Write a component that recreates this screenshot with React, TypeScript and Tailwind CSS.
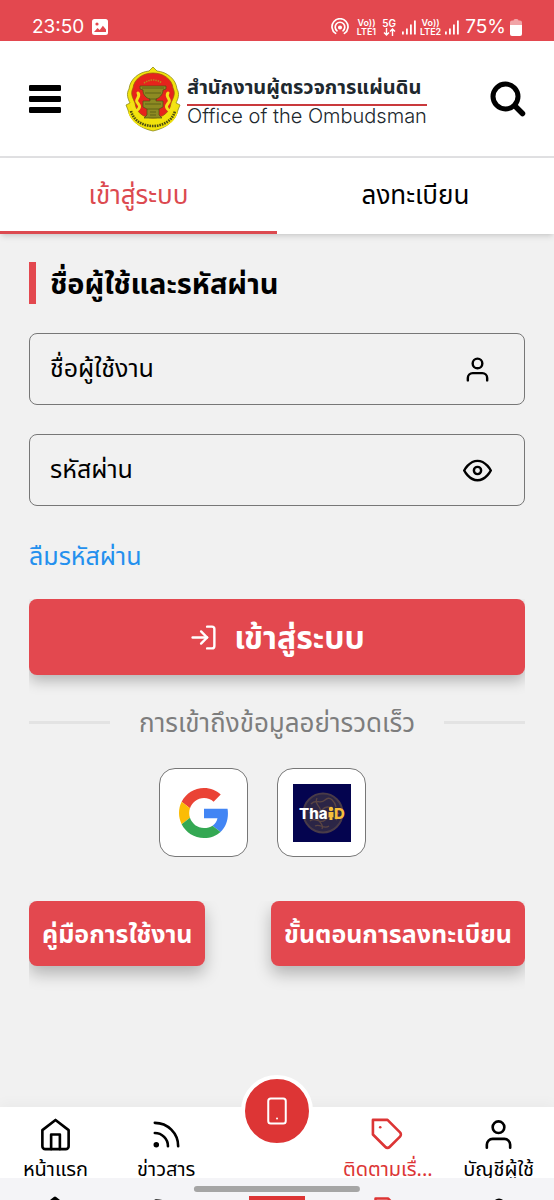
import { useState } from 'react'
import { FiEye, FiHome, FiLogIn, FiRss, FiSmartphone, FiTag, FiUser } from 'react-icons/fi'

const NAV_ITEMS = [
  { label: 'หน้าแรก', icon: FiHome, active: false },
  { label: 'ข่าวสาร', icon: FiRss, active: false },
  { label: '', icon: FiSmartphone, active: false },
  { label: 'ติดตามเรื่...', icon: FiTag, active: true },
  { label: 'บัญชีผู้ใช้', icon: FiUser, active: false },
]

const TABS = [
  { key: 'login', label: 'เข้าสู่ระบบ' },
  { key: 'register', label: 'ลงทะเบียน' },
] as const

function Signal() {
  return (
    <svg viewBox="0 0 14 15" className="h-[15px] w-3.5" fill="currentColor">
      <rect x="0" y="11.5" width="1.8" height="3" />
      <rect x="4" y="8.5" width="1.8" height="6" />
      <rect x="8" y="4.5" width="1.8" height="10" />
      <rect x="12" y="0.5" width="1.8" height="14" />
    </svg>
  )
}

function Volte({ sim }: { sim: number }) {
  return (
    <div className="flex flex-col items-center text-[9px] leading-[9px] font-semibold">
      <span>Vo))</span>
      <span>LTE{sim}</span>
    </div>
  )
}

function StatusBar() {
  return (
    <div className="flex h-[41px] items-end justify-between bg-[#e3484f] px-8 pb-1 font-['Inter',sans-serif] text-white">
      <div className="flex items-center gap-2">
        <span className="text-[19px] leading-5">23:50</span>
        <svg viewBox="0 0 16 16" className="h-4 w-4">
          <rect width="16" height="16" rx="2.5" fill="currentColor" />
          <circle cx="5" cy="5" r="1.6" fill="#e3484f" />
          <path d="M2 13l3.5-4 2.2 2 3.2-4.2L14 10.5V13z" fill="#e3484f" />
        </svg>
      </div>
      <div className="flex items-center gap-1">
        <svg viewBox="0 0 18 18" className="mr-1 h-[18px] w-[18px]" fill="none" stroke="currentColor" strokeWidth="1.7" strokeLinecap="round">
          <path d="M4.6 15.4a8 8 0 1 1 8.8 0" />
          <path d="M6 12.8a4.8 4.8 0 1 1 6 0" />
          <circle cx="9" cy="9.5" r="1.2" fill="currentColor" />
        </svg>
        <Volte sim={1} />
        <div className="mx-0.5 flex flex-col items-center">
          <span className="text-[10px] leading-[9px] font-semibold">5G</span>
          <svg viewBox="0 0 13 8" className="h-2 w-[13px]" fill="none" stroke="currentColor" strokeWidth="1.4">
            <path d="M3.5 0v7M1 4.5l2.5 2.5L6 4.5M9.5 8V1M7 3.5L9.5 1 12 3.5" />
          </svg>
        </div>
        <Signal />
        <Volte sim={2} />
        <Signal />
        <span className="ml-0.5 text-[19px] leading-5">75%</span>
        <svg viewBox="0 0 12 17" className="h-[17px] w-3" fill="currentColor">
          <path d="M3.5 1.5A1.5 1.5 0 0 1 5 0h2a1.5 1.5 0 0 1 1.5 1.5H10a2 2 0 0 1 2 2V7H0V3.5a2 2 0 0 1 2-2z" opacity="0.5" />
          <path d="M0 6h12v9a2 2 0 0 1-2 2H2a2 2 0 0 1-2-2z" />
        </svg>
      </div>
    </div>
  )
}

function Emblem() {
  return (
    <svg viewBox="0 0 56 66" className="h-[66px] w-14 shrink-0">
      {/* outer frame */}
      <path
        d="M28 1l4 4c10 1 19 8 20 18 3 5 1 10-1 14l4 2-2 5c-2 10-11 18-25 21C14 62 5 54 3 44l-2-5 4-2C3 33 1 28 4 23 5 13 14 6 24 5z"
        fill="#f2e30c"
        stroke="#8d8a1a"
        strokeWidth="0.8"
      />
      <path
        d="M28 7c10 0 19 6 20 15 3 6 0 10-2 15-1 9-8 15-18 15s-17-6-18-15C8 32 5 28 8 22 9 13 18 7 28 7z"
        fill="#e6231c"
        stroke="#9b5b12"
        strokeWidth="0.8"
      />
      <path d="M19 17q9-6 18 0" fill="none" stroke="#b98a1d" strokeWidth="1.6" strokeDasharray="1.4 1" />
      {/* tray on its pedestal */}
      <g fill="#8d8a22" stroke="#4e5113" strokeWidth="0.7">
        <path d="M15 20h26v3l-3 1c0 5-4 8-7 9v2h7v6l-4 2v6l3 3H19l3-3v-6l-4-2v-6h7v-2c-4-1-7-4-7-9l-3-1z" />
        <path d="M17 22h22M20 27h16M24 33h8M20 38h16M22 43h12M25 46h6M25 49h6" fill="none" />
      </g>
      {/* side figures */}
      <g fill="none" stroke="#f5e21a" strokeWidth="3" strokeLinecap="round">
        <path d="M13 27c3 4-3 6-1 9s5 5-1 9c-3-2-4-4-4-7" />
        <path d="M43 27c-3 4 3 6 1 9s-5 5 1 9c3-2 4-4 4-7" />
      </g>
      <path d="M6 45c5 20 39 20 44 0" fill="none" stroke="#f2e30c" strokeWidth="6" />
      <path d="M6 45c5 20 39 20 44 0" fill="none" stroke="#4c4c12" strokeWidth="2.6" strokeDasharray="1.6 0.9" />
    </svg>
  )
}

function Header() {
  return (
    <header className="flex h-[117px] items-center justify-between border-b-2 border-[#e0e0e2] bg-white px-7">
      <button type="button" aria-label="เมนู">
        <svg viewBox="0 0 34 28" className="h-7 w-[34px]" fill="currentColor">
          <rect x="1" y="0" width="32" height="6" rx="1.3" />
          <rect x="1" y="11" width="32" height="6" rx="1.3" />
          <rect x="1" y="22" width="32" height="6" rx="1.3" />
        </svg>
      </button>
      <a href="#" className="flex items-center gap-1.5">
        <Emblem />
        <div className="text-[#20282e]">
          <p className="border-b-2 border-[#c9393c] text-xl leading-8 font-bold whitespace-nowrap">สำนักงานผู้ตรวจการแผ่นดิน</p>
          <p className="font-['Inter',sans-serif] text-xl leading-5 font-light whitespace-nowrap">Office of the Ombudsman</p>
        </div>
      </a>
      <button type="button" aria-label="ค้นหา">
        <svg viewBox="0 0 36 36" className="h-9 w-9" fill="none" stroke="currentColor" strokeLinecap="round">
          <circle cx="15.5" cy="15.5" r="12.5" strokeWidth="5" />
          <path d="M25 25l7.5 7.5" strokeWidth="5.5" />
        </svg>
      </button>
    </header>
  )
}

function GoogleLogo() {
  return (
    <svg viewBox="0 0 48 48" className="h-[50px] w-[50px]">
      <path fill="#EA4335" d="M24 9.5c3.54 0 6.71 1.22 9.21 3.6l6.85-6.85C35.9 2.38 30.47 0 24 0 14.62 0 6.51 5.38 2.56 13.22l7.98 6.19C12.43 13.72 17.74 9.5 24 9.5z" />
      <path fill="#4285F4" d="M46.98 24.55c0-1.57-.15-3.09-.38-4.55H24v9.02h12.94c-.58 2.96-2.26 5.48-4.78 7.18l7.73 6c4.51-4.18 7.09-10.36 7.09-17.65z" />
      <path fill="#FBBC05" d="M10.53 28.59c-.48-1.45-.76-2.99-.76-4.59s.27-3.14.76-4.59l-7.98-6.19C.92 16.46 0 20.12 0 24c0 3.88.92 7.54 2.56 10.78l7.97-6.19z" />
      <path fill="#34A853" d="M24 48c6.48 0 11.93-2.13 15.89-5.81l-7.73-6c-2.15 1.45-4.92 2.3-8.16 2.3-6.26 0-11.57-4.22-13.47-9.91l-7.98 6.19C6.51 42.62 14.62 48 24 48z" />
    </svg>
  )
}

function ThaiDLogo() {
  return (
    <svg viewBox="0 0 58 58" className="h-[58px] w-[58px] font-['Inter',sans-serif] text-[15px] font-extrabold">
      <rect width="58" height="58" fill="#04044f" />
      <circle cx="30" cy="29" r="19.5" fill="#2b2546" stroke="#493b48" strokeWidth="2" />
      <path
        d="M18 20c5-6 9 1 14-4s10 2 11 7M16 29c5-5 7 4 13-3s12 0 17 4M17 37c5-5 10 4 15-1s8-4 12 0M22 42c5-3 9 4 14 0M24 14c-4 8 7 8 2 16s6 8 3 15"
        fill="none"
        stroke="#5a4543"
        strokeWidth="1.3"
      />
      <text x="6" y="35" fill="#fff">Tha</text>
      <text x="41" y="35" fill="#f6bd3b">D</text>
      <circle cx="38" cy="25" r="2.2" fill="#f6bd3b" />
      <path d="M35.5 28h5v5h-1v3h-3v-3h-1z" fill="#f6bd3b" />
    </svg>
  )
}

function BottomNav() {
  return (
    <nav className="bg-white shadow-[0_-4px_12px_rgba(0,0,0,0.03)]">
      <ul className="grid h-[71px] grid-cols-5">
        {NAV_ITEMS.map(({ label, icon: Icon, active }) =>
          label ? (
            <li key={label}>
              <a href="#" className={`flex flex-col items-center pt-2.5 ${active ? 'text-[#dc3535]' : 'text-black'}`}>
                <Icon className="h-[35px] w-[35px]" strokeWidth={1.8} />
                <span className="text-xl leading-9 whitespace-nowrap">{label}</span>
              </a>
            </li>
          ) : (
            <li key="center" className="relative">
              <button
                type="button"
                aria-label="แอปพลิเคชัน"
                className="absolute -top-8 left-1/2 flex h-[72px] w-[72px] -translate-x-1/2 items-center justify-center rounded-full border-4 border-white bg-[#dd3535] text-white"
              >
                <Icon className="h-[30px] w-[30px]" strokeWidth={1.6} />
              </button>
            </li>
          ),
        )}
      </ul>
      {/* gesture area */}
      <div className="relative h-[22px] overflow-hidden bg-[#f4f4f7]">
        <div className="grid grid-cols-5 justify-items-center pt-[18px]">
          <FiHome className="h-[30px] w-[30px]" strokeWidth={3} />
          <FiRss className="h-[30px] w-[30px]" strokeWidth={3} />
          <span className="h-1 w-14 bg-[#dd3535]" />
          <FiTag className="h-[30px] w-[30px] text-[#dd3535]" />
          <FiUser className="h-[30px] w-[30px]" />
        </div>
        <span className="absolute top-2 left-1/2 h-[6px] w-[30%] -translate-x-1/2 rounded-full bg-[#a5a5a5]" />
      </div>
    </nav>
  )
}

export default function App() {
  const [tab, setTab] = useState<'login' | 'register'>('login')
  const [showPassword, setShowPassword] = useState(false)

  return (
    <div className="flex min-h-screen flex-col bg-[#f1f1f1] font-['Noto_Sans_Thai','Noto_Sans',sans-serif] text-black">
      <StatusBar />
      <Header />

      <div className="grid h-[76px] grid-cols-2 bg-white shadow-md" role="tablist">
        {TABS.map((t) => (
          <button
            key={t.key}
            type="button"
            role="tab"
            aria-selected={tab === t.key}
            onClick={() => setTab(t.key)}
            className={`border-b-3 pt-1 text-[26px] ${tab === t.key ? 'border-[#dc4a50] text-[#dc4a50]' : 'border-transparent'}`}
          >
            {t.label}
          </button>
        ))}
      </div>

      <main className="flex-1 px-[29px] pt-7">
        <h1 className="mb-[29px] border-l-7 border-[#e3484f] pt-1 pl-3.5 text-[29px] leading-[38px] font-bold">ชื่อผู้ใช้และรหัสผ่าน</h1>

        <form onSubmit={(e) => e.preventDefault()}>
          <div className="mb-[29px] flex h-[72px] items-center rounded-lg border border-[#777] pr-8 pl-5">
            <input
              type="text"
              aria-label="ชื่อผู้ใช้งาน"
              placeholder="ชื่อผู้ใช้งาน"
              className="h-full min-w-0 flex-1 bg-transparent text-[25px] outline-none placeholder:text-black"
            />
            <FiUser className="h-[29px] w-[29px]" />
          </div>
          <div className="mb-[29px] flex h-[72px] items-center rounded-lg border border-[#777] pr-8 pl-5">
            <input
              type={showPassword ? 'text' : 'password'}
              aria-label="รหัสผ่าน"
              placeholder="รหัสผ่าน"
              className="h-full min-w-0 flex-1 bg-transparent text-[25px] outline-none placeholder:text-black"
            />
            <button type="button" aria-label="แสดงรหัสผ่าน" onClick={() => setShowPassword(!showPassword)}>
              <FiEye className="h-[29px] w-[29px]" />
            </button>
          </div>
          <a href="#" className="mb-6 block pt-1 text-[25px] leading-9 text-[#2490ee]">ลืมรหัสผ่าน</a>

          <div className="overflow-hidden pb-6">
            <button
              type="submit"
              className="flex h-[76px] w-full items-center justify-center gap-4 rounded-lg bg-[#e3484f] text-[32px] font-bold text-white shadow-[0_6px_14px_rgba(0,0,0,0.25)]"
            >
              <FiLogIn className="h-[29px] w-[29px]" />
              <span className="pt-1">เข้าสู่ระบบ</span>
            </button>
          </div>
        </form>

        <div className="mb-[23px] flex items-center gap-[29px]">
          <span className="h-[3px] flex-1 bg-[#e3e3e3]" />
          <span className="pt-1 text-[26px] leading-[42px] text-[#7d7d7d]">การเข้าถึงข้อมูลอย่ารวดเร็ว</span>
          <span className="h-[3px] flex-1 bg-[#e3e3e3]" />
        </div>

        <div className="mb-11 flex justify-center">
          <button type="button" aria-label="Google" className="mr-[29px] flex h-[89px] w-[89px] items-center justify-center rounded-2xl border border-[#777] bg-white">
            <GoogleLogo />
          </button>
          <button type="button" aria-label="ThaiD" className="mr-[29px] flex h-[89px] w-[89px] items-center justify-center rounded-2xl border border-[#777] bg-white">
            <ThaiDLogo />
          </button>
        </div>

        <div className="flex justify-between overflow-hidden pb-7 text-[25px] font-bold text-white">
          <button type="button" className="h-[65px] rounded-lg bg-[#e3484f] px-[13px] pt-1 shadow-[0_8px_16px_rgba(0,0,0,0.25)]">คู่มือการใช้งาน</button>
          <button type="button" className="h-[65px] rounded-lg bg-[#e3484f] px-[13px] pt-1 shadow-[0_8px_16px_rgba(0,0,0,0.25)]">ขั้นตอนการลงทะเบียน</button>
        </div>
      </main>

      <BottomNav />
    </div>
  )
}
